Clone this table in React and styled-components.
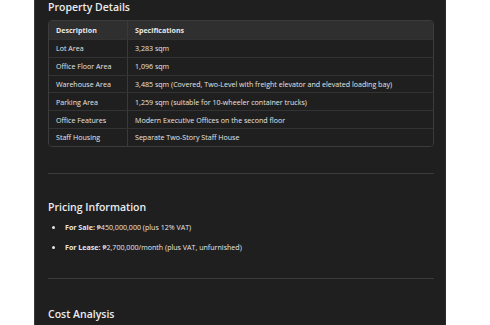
import React from 'react';
import styled, { createGlobalStyle } from 'styled-components';

const GlobalStyle = createGlobalStyle`
  body {
    margin: 0;
    background: #ffffff;
    font-family: "Open Sans", "Noto Sans", sans-serif;
  }
`;

const Page = styled.div`
  width: 490px;
  height: 325px;
  overflow: hidden;
`;

const Panel = styled.div`
  margin-left: 34px;
  width: 412px;
  height: 325px;
  box-sizing: border-box;
  background: #1f1f1f;
  border-left: 1px solid #3a3a3a;
  border-right: 1px solid #2a2a2a;
  padding: 0 11px 0 13px;
  color: #e6e6e6;
`;

const SectionTitle = styled.h3`
  margin: ${p => p.top || 0}px 0 0;
  font-size: 10.5px;
  line-height: 14px;
  font-weight: 600;
  color: #ececec;
`;

const Table = styled.div`
  margin-top: 6px;
  border: 1px solid #3c3c3c;
  border-radius: 4px;
  overflow: hidden;
`;

const Row = styled.div`
  display: grid;
  grid-template-columns: 78px 1fr;
  height: ${p => (p.head ? 18 : 17.8)}px;
  background: ${p => (p.head ? '#2f2f2f' : '#1f1f1f')};
  border-top: ${p => (p.first ? 'none' : '1px solid #333333')};
  box-sizing: border-box;
`;

const Cell = styled.div`
  display: flex;
  align-items: center;
  padding-left: 7px;
  font-size: 7.1px;
  font-weight: ${p => (p.head ? 700 : 400)};
  color: #e6e6e6;
  white-space: nowrap;
  & + & {
    border-left: 1px solid #3a3a3a;
  }
`;

const Divider = styled.hr`
  margin: ${p => p.top}px 0 0;
  border: none;
  border-top: 1px solid #3b3b3b;
`;

const List = styled.ul`
  margin: 8px 0 0;
  padding: 0 0 0 17px;
  list-style: none;
`;

const Item = styled.li`
  position: relative;
  font-size: 7.1px;
  line-height: 10px;
  color: #e6e6e6;
  & + & {
    margin-top: 10px;
  }
  &::before {
    content: '';
    position: absolute;
    left: -13px;
    top: 4px;
    width: 3px;
    height: 3px;
    border-radius: 50%;
    background: #e6e6e6;
  }
`;

const Strong = styled.strong`
  font-weight: 700;
`;

const specs = [
  ['Lot Area', '3,283 sqm'],
  ['Office Floor Area', '1,096 sqm'],
  ['Warehouse Area', '3,485 sqm (Covered, Two-Level with freight elevator and elevated loading bay)'],
  ['Parking Area', '1,259 sqm (suitable for 10-wheeler container trucks)'],
  ['Office Features', 'Modern Executive Offices on the second floor'],
  ['Staff Housing', 'Separate Two-Story Staff House'],
];

export default function App() {
  return (
    <Page>
      <GlobalStyle />
      <Panel>
        <SectionTitle>Property Details</SectionTitle>
        <Table>
          <Row head first>
            <Cell head>Description</Cell>
            <Cell head>Specifications</Cell>
          </Row>
          {specs.map(([k, v]) => (
            <Row key={k}>
              <Cell>{k}</Cell>
              <Cell>{v}</Cell>
            </Row>
          ))}
        </Table>
        <Divider top={26} />
        <SectionTitle top={26}>Pricing Information</SectionTitle>
        <List>
          <Item><Strong>For Sale:</Strong> ₱450,000,000 (plus 12% VAT)</Item>
          <Item><Strong>For Lease:</Strong> ₱2,700,000/month (plus VAT, unfurnished)</Item>
        </List>
        <Divider top={26} />
        <SectionTitle top={28}>Cost Analysis</SectionTitle>
      </Panel>
    </Page>
  );
}
